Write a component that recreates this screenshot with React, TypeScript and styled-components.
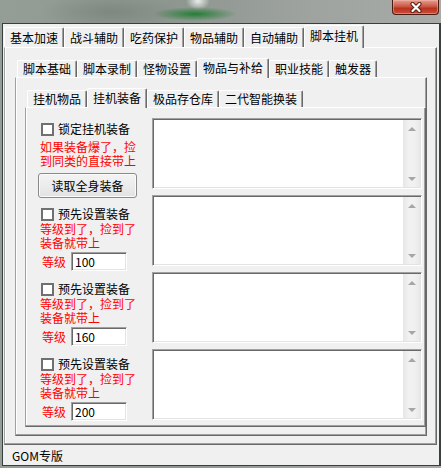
import React from 'react'
import styled, { createGlobalStyle } from 'styled-components'

const GlobalStyle = createGlobalStyle`
  html, body {
    margin: 0;
    padding: 0;
  }
  body {
    width: 441px;
    height: 468px;
    overflow: hidden;
    font-family: "Noto Sans CJK SC", "Noto Sans", sans-serif;
    font-size: 12px;
    color: #000;
  }
  * {
    box-sizing: border-box;
  }
`

const Screen = styled.div`
  width: 441px;
  height: 468px;
  display: flex;
  flex-direction: column;
  background:
    radial-gradient(ellipse 42px 7px at 195px 14px, rgba(30, 125, 48, 0.95), rgba(30, 125, 48, 0) 100%),
    radial-gradient(ellipse 12px 9px at 198px 1px, rgba(238, 242, 238, 0.95), rgba(238, 242, 238, 0) 100%),
    radial-gradient(ellipse 70px 18px at 110px 12px, rgba(112, 120, 114, 0.55), rgba(112, 120, 114, 0) 100%),
    linear-gradient(to right, #959d97, #8e9690 40%, #9ea39f 70%, #a8aba8);
`

const TitleStrip = styled.div`
  height: 23px;
  flex: none;
  display: flex;
  justify-content: flex-end;
  align-items: flex-start;
  padding-right: 2px;
`

const CloseButton = styled.div`
  width: 47px;
  height: 15px;
  border: 1px solid #4d1a12;
  border-top: none;
  border-radius: 0 0 4px 4px;
  background: linear-gradient(#e2a093, #cc5a45 45%, #b8321e 60%, #c9503a);
  box-shadow: inset 0 0 0 1px rgba(255, 190, 175, 0.45);
  display: flex;
  align-items: center;
  justify-content: center;
`

const Frame = styled.div`
  margin-left: 2px;
  height: 443px;
  flex: none;
  border: 1px solid #38403f;
  border-right-width: 2px;
  background: #f0f0f0;
  display: flex;
  flex-direction: column;
  padding-top: 1px;
`

const TabRow = styled.div<{ $indent: number; $h: number }>`
  display: flex;
  align-items: flex-end;
  flex: none;
  height: ${p => p.$h + 2}px;
  padding-left: ${p => p.$indent}px;
  position: relative;
  z-index: 1;
`

const Tab = styled.div<{ $active?: boolean; $h: number }>`
  height: ${p => (p.$active ? p.$h + 3 : p.$h)}px;
  margin-bottom: ${p => (p.$active ? -1 : 0)}px;
  padding: 0 5px ${p => (p.$active ? '2px' : '0')} 5px;
  border-top: 1px solid #fff;
  border-left: 1px solid #fff;
  border-right: 1px solid #696969;
  box-shadow: inset -1px 0 0 #a0a0a0;
  border-radius: 2px 2px 0 0;
  background: #f0f0f0;
  display: flex;
  align-items: center;
  line-height: 14px;
  white-space: nowrap;
`

const Panel = styled.div<{ $pad: string; $margin?: string }>`
  flex: 1;
  min-height: 0;
  display: flex;
  flex-direction: column;
  margin: ${p => p.$margin || '0'};
  padding: ${p => p.$pad};
  border-top: 1px solid #fff;
  border-left: 1px solid #a0a0a0;
  border-right: 1px solid #696969;
  border-bottom: 1px solid #696969;
  box-shadow: inset -1px -1px 0 #a0a0a0, inset 1px 0 0 #fff;
`

const Body = styled.div`
  display: flex;
  align-items: flex-start;
`

const LeftCol = styled.div`
  width: 114px;
  flex: none;
  display: flex;
  flex-direction: column;
`

const Section = styled.div<{ $top: number }>`
  display: flex;
  flex-direction: column;
  align-items: flex-start;
  margin-top: ${p => p.$top}px;
`

const CheckRow = styled.label`
  display: flex;
  align-items: center;
  gap: 4px;
  height: 14px;
  line-height: 14px;
  margin-left: 3px;
  white-space: nowrap;
`

const CheckBox = styled.span`
  width: 13px;
  height: 13px;
  flex: none;
  border: 2px solid #707070;
  background: #fff;
`

const Hint = styled.div<{ $gap: number }>`
  width: 98px;
  margin: ${p => p.$gap}px 0 0 2px;
  color: #ff0000;
  line-height: 14px;
`

const ActionButton = styled.button`
  width: 99px;
  height: 25px;
  margin-top: 5px;
  padding: 0;
  font: inherit;
  line-height: 14px;
  color: #000;
  border: 1px solid #8a8a8a;
  border-radius: 3px;
  background: linear-gradient(#f3f3f3, #ececec 50%, #e2e2e2);
  box-shadow: inset 0 0 0 1px #fbfbfb;
`

const LevelRow = styled.div`
  display: flex;
  align-items: center;
  gap: 5px;
  margin: 2px 0 0 4px;
`

const LevelLabel = styled.span`
  color: #ff0000;
  line-height: 14px;
`

const LevelInput = styled.input`
  width: 56px;
  height: 19px;
  padding: 0 0 0 3px;
  font-family: "Noto Sans CJK SC", "Noto Sans", sans-serif;
  font-size: 12px;
  color: #000;
  background: #fff;
  border-top: 1px solid #a0a0a0;
  border-left: 1px solid #a0a0a0;
  border-bottom: 1px solid #fff;
  border-right: 1px solid #fff;
  box-shadow: inset 1px 1px 0 #696969, inset -1px -1px 0 #e3e3e3;
  outline: none;
`

const ListCol = styled.div`
  width: 270px;
  flex: none;
  display: flex;
  flex-direction: column;
  gap: 6px;
`

const ListBox = styled.div`
  height: 71px;
  background: #fff;
  border-top: 1px solid #a0a0a0;
  border-left: 1px solid #a0a0a0;
  border-bottom: 1px solid #fff;
  border-right: 1px solid #fff;
  box-shadow: inset 1px 1px 0 #696969, inset -1px -1px 0 #e3e3e3;
  display: flex;
  justify-content: flex-end;
`

const ScrollBar = styled.div`
  width: 17px;
  margin: 1px 1px 1px 0;
  background: linear-gradient(to right, #e6e6e6, #f1f1f1 35%, #f1f1f1 65%, #e8e8e8);
  display: flex;
  flex-direction: column;
  justify-content: space-between;
`

const ScrollArrow = styled.div<{ $down?: boolean }>`
  height: 17px;
  display: flex;
  align-items: center;
  justify-content: center;

  &::before {
    content: '';
    border-left: 4px solid transparent;
    border-right: 4px solid transparent;
    ${p => (p.$down ? 'border-top' : 'border-bottom')}: 4px solid #a6a6a6;
  }
`

const StatusBar = styled.div`
  height: 20px;
  flex: none;
  padding: 4px 0 0 9px;
  line-height: 14px;
  white-space: nowrap;
`

const topTabs = ['基本加速', '战斗辅助', '吃药保护', '物品辅助', '自动辅助', '脚本挂机']
const midTabs = ['脚本基础', '脚本录制', '怪物设置', '物品与补给', '职业技能', '触发器']
const innerTabs = ['挂机物品', '挂机装备', '极品存仓库', '二代智能换装']
const presets = ['100', '160', '200']

const List = () => (
  <ListBox>
    <ScrollBar>
      <ScrollArrow />
      <ScrollArrow $down />
    </ScrollBar>
  </ListBox>
)

const App: React.FC = () => (
  <>
    <GlobalStyle />
    <Screen>
      <TitleStrip>
        <CloseButton>
          <svg width="14" height="11" viewBox="0 0 14 11">
            <path d="M3.5 2 L10.5 9 M10.5 2 L3.5 9" stroke="#5c1d12" strokeWidth="4.2" strokeLinecap="round" />
            <path d="M3.5 2 L10.5 9 M10.5 2 L3.5 9" stroke="#fff" strokeWidth="2.2" strokeLinecap="round" />
          </svg>
        </CloseButton>
      </TitleStrip>
      <Frame>
        <TabRow $indent={1} $h={20}>
          {topTabs.map(t => (
            <Tab key={t} $h={20} $active={t === '脚本挂机'}>{t}</Tab>
          ))}
        </TabRow>
        <Panel $margin="0 2px 0 1px" $pad="10px 9px 8px 10px">
          <TabRow $indent={2} $h={17}>
            {midTabs.map(t => (
              <Tab key={t} $h={17} $active={t === '物品与补给'}>{t}</Tab>
            ))}
          </TabRow>
          <Panel $pad="10px 0 8px 9px">
            <TabRow $indent={2} $h={17}>
              {innerTabs.map(t => (
                <Tab key={t} $h={17} $active={t === '挂机装备'}>{t}</Tab>
              ))}
            </TabRow>
            <Panel $pad="10px 4px 0 12px">
              <Body>
                <LeftCol>
                  <Section $top={4}>
                    <CheckRow><CheckBox />锁定挂机装备</CheckRow>
                    <Hint $gap={4}>如果装备爆了，捡到同类的直接带上</Hint>
                    <ActionButton>读取全身装备</ActionButton>
                  </Section>
                  {presets.map((v, i) => (
                    <Section key={v} $top={i === 0 ? 9 : 11}>
                      <CheckRow><CheckBox />预先设置装备</CheckRow>
                      <Hint $gap={1}>等级到了，捡到了装备就带上</Hint>
                      <LevelRow>
                        <LevelLabel>等级</LevelLabel>
                        <LevelInput defaultValue={v} readOnly />
                      </LevelRow>
                    </Section>
                  ))}
                </LeftCol>
                <ListCol>
                  <List />
                  <List />
                  <List />
                  <List />
                </ListCol>
              </Body>
            </Panel>
          </Panel>
        </Panel>
        <StatusBar>GOM专版</StatusBar>
      </Frame>
    </Screen>
  </>
)

export default App
